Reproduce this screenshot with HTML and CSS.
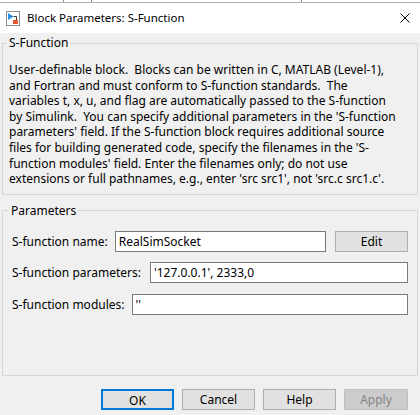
FILE: index.html
```html
<!DOCTYPE html>
<html>
<head>
<meta charset="utf-8">
<link rel="stylesheet" href="styles.css">
</head>
<body>
<div class="topstrip"><span class="tick t1"></span><span class="tick t2"></span><span class="tick t3"></span></div>
<div class="titlebar">
  <svg class="appicon" width="14" height="15" viewBox="0 0 14 15">
    <rect x="0.5" y="0.5" width="13" height="14" fill="#fff" stroke="#8c8c8c"/>
    <path d="M2 2 L2 9 L7.5 5.5 Z" fill="#2f8fe0"/>
    <path d="M7.5 5.5 H10.5 V9" stroke="#3a3a3a" stroke-width="1" fill="none"/>
    <rect x="7" y="9" width="5" height="4" fill="#e4572e"/>
  </svg>
  <span class="title">Block Parameters: S-Function</span>
  <svg class="close" width="10" height="10" viewBox="0 0 10 10">
    <path d="M0.5 0.5 L9.5 9.5 M9.5 0.5 L0.5 9.5" stroke="#000" stroke-width="1" fill="none"/>
  </svg>
</div>
<div class="content">
  <fieldset class="group desc-group">
    <legend>S-Function</legend>
    <p class="desc">User-definable block.&nbsp; Blocks can be written in C, MATLAB (Level-1),<br>and Fortran and must conform to S-function standards.&nbsp; The<br>variables t, x, u, and flag are automatically passed to the S-function<br>by Simulink.&nbsp; You can specify additional parameters in the 'S-function<br>parameters' field. If the S-function block requires additional source<br>files for building generated code, specify the filenames in the 'S-<br>function modules' field. Enter the filenames only; do not use<br>extensions or full pathnames, e.g., enter 'src src1', not 'src.c src1.c'.</p>
  </fieldset>
  <fieldset class="group params">
    <legend>Parameters</legend>
    <div class="row">
      <span class="label">S-function name:</span>
      <div class="field">RealSimSocket</div>
      <button class="btn edit">Edit</button>
    </div>
    <div class="row">
      <span class="label wide">S-function parameters:</span>
      <div class="field">'127.0.0.1', 2333,0</div>
    </div>
    <div class="row">
      <span class="label">S-function modules:</span>
      <div class="field">''</div>
    </div>
  </fieldset>
  <div class="actions">
    <button class="btn default">OK</button>
    <button class="btn">Cancel</button>
    <button class="btn">Help</button>
    <button class="btn disabled">Apply</button>
  </div>
</div>
</body>
</html>
```
FILE: styles.css
```css
html, body {
  margin: 0;
  padding: 0;
}
body {
  width: 420px;
  height: 415px;
  overflow: hidden;
  background: #f0f0f0;
  font-family: "Noto Sans", "Liberation Sans", sans-serif;
  font-size: 12px;
  color: #000;
}
.topstrip {
  height: 2px;
  background: #fff;
  border-bottom: 1px solid #b4b4b4;
  display: flex;
}
.tick {
  height: 2px;
  border-right: 1px solid #8a8a8a;
}
.t1 { width: 63px; }
.t2 { width: 27px; }
.t3 { width: 209px; }

.titlebar {
  height: 30px;
  background: #fff;
  display: flex;
  align-items: center;
  padding-left: 6px;
}
.appicon {
  display: block;
  margin-right: 7px;
}
.title {
  font-size: 11.5px;
  line-height: 16px;
}
.close {
  display: block;
  margin-left: auto;
  margin-right: 10px;
}

.content {
  padding-top: 2px;
}
.group {
  margin: 0 2px;
  border: 1px solid #d7d7d7;
  min-width: 0;
}
.group legend {
  padding: 0 2px;
  margin-left: -2px;
  line-height: 16px;
}
.desc-group {
  padding: 11px 9px 7px 6px;
}
.desc {
  margin: 0;
  line-height: 15.6px;
  white-space: nowrap;
}
.params {
  margin-top: 8px;
  padding: 12px 9px 60px 8px;
  display: flex;
  flex-direction: column;
  gap: 10.5px;
}
.row {
  display: flex;
  align-items: center;
  height: 21px;
}
.label {
  margin-left: 1px;
  margin-right: 7px;
  white-space: nowrap;
}
.label.wide {
  margin-right: 9px;
}
.field {
  flex: 1;
  height: 21px;
  box-sizing: border-box;
  border: 1px solid #7a7a7a;
  background: #fff;
  padding-left: 3px;
  line-height: 19px;
  white-space: nowrap;
}
.btn {
  font-family: inherit;
  font-size: 12px;
  color: #000;
  width: 73px;
  height: 21px;
  box-sizing: border-box;
  border: 1px solid #adadad;
  background: #e1e1e1;
  padding: 0;
  margin: 0;
  line-height: 19px;
}
.edit {
  margin-left: 9px;
}
.actions {
  margin-top: 13px;
  display: flex;
  justify-content: flex-end;
  gap: 8px;
  padding-right: 12px;
}
.default {
  border: 2px solid #0078d7;
}
.disabled {
  width: 64px;
  background: #cccccc;
  border-color: #bfbfbf;
  color: #838383;
}
```
